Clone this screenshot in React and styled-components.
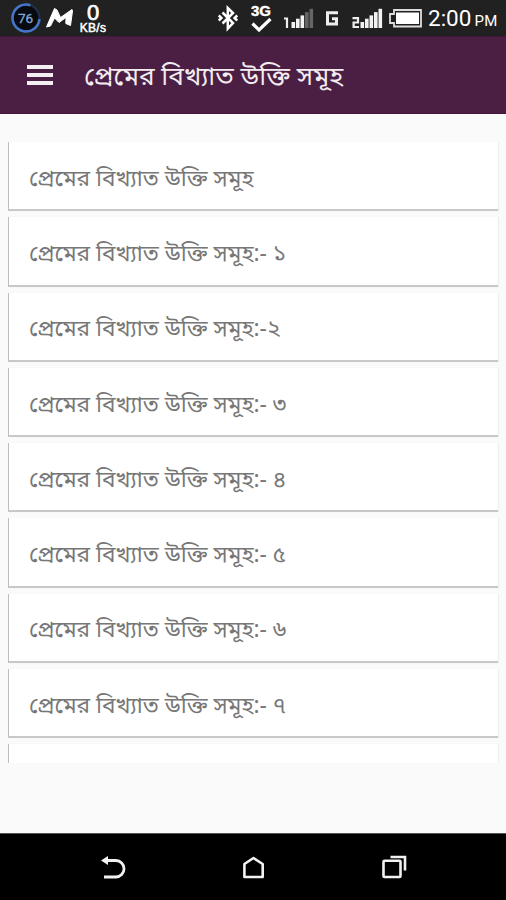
import React from "react";
import styled, { createGlobalStyle } from "styled-components";

const Global = createGlobalStyle`
  * { box-sizing: border-box; }
  body { margin: 0; background: #fafafa; }
`;

const Screen = styled.div`
  width: 506px;
  height: 900px;
  display: flex;
  flex-direction: column;
  overflow: hidden;
  background: #fafafa;
  font-family: "Noto Sans Bengali", "Noto Sans", Roboto, sans-serif;
`;

const StatusBar = styled.div`
  height: 36px;
  flex: none;
  display: flex;
  align-items: flex-start;
  background: #212121;
  color: #fff;
`;

const Slot = styled.div`
  flex: none;
  width: ${(p) => p.$w}px;
  height: 36px;
  margin-left: ${(p) => p.$gap}px;
  svg { display: block; }
`;

const Speed = styled(Slot)`
  display: flex;
  flex-direction: column;
  align-items: center;
  font-family: "Liberation Sans", sans-serif;
  white-space: nowrap;
`;

const SpeedValue = styled.span`
  height: 22px;
  font-size: 22px;
  line-height: 25px;
  -webkit-text-stroke: 0.7px #fff;
`;

const SpeedUnit = styled.span`
  font-size: 12px;
  line-height: 12px;
  -webkit-text-stroke: 0.5px #fff;
  letter-spacing: 0.3px;
`;

const Clock = styled(Slot)`
  display: flex;
  align-items: baseline;
  gap: 3px;
  font: 400 22.5px/37px Roboto, sans-serif;
  white-space: nowrap;
  small { font-size: 15px; letter-spacing: 0.3px; }
`;

const AppBar = styled.header`
  height: 78px;
  flex: none;
  display: flex;
  align-items: center;
  padding-left: 27px;
  background: #4b1f43;
  border-top: 1px solid #421839;
  border-bottom: 1px solid #42123a;
`;

const MenuButton = styled.button`
  width: 26px;
  height: 20px;
  padding: 0;
  border: 0;
  background: none;
  display: flex;
  flex-direction: column;
  justify-content: space-between;
  &::before, &::after, span {
    content: "";
    display: block;
    width: 26px;
    height: 4px;
    background: #f3eef2;
  }
`;

const Title = styled.h1`
  margin: 0 0 0 31px;
  padding-top: 8px;
  font-size: 26.2px;
  font-weight: 400;
  line-height: 40px;
  white-space: nowrap;
  color: #f3ecf1;
`;

const List = styled.main`
  height: 621px;
  flex: none;
  margin-top: 28px;
  padding: 0 8px;
  overflow: hidden;
`;

const Row = styled.div`
  height: 69.3px;
  margin-bottom: 6px;
  padding: 8px 0 0 20px;
  display: flex;
  align-items: center;
  background: #fff;
  border-left: 1px solid #bdbdbd;
  border-bottom: 2px solid #c8c8c8;
  box-shadow: 1px 0 1px #eee;
`;

const RowText = styled.span`
  font-size: 22.7px;
  font-weight: 400;
  line-height: 34px;
  white-space: nowrap;
  color: #777;
`;

const NavBar = styled.nav`
  height: 67px;
  flex: none;
  margin-top: auto;
  padding: 0 99px 0 100px;
  display: flex;
  align-items: center;
  justify-content: space-between;
  background: #000;
  border-top: 1px solid #555;
`;

const Signal = ({ digit, dim = 0 }) => (
  <svg width="32" height="36" viewBox="0 0 32 36">
    <path d={digit} fill="none" stroke="#eee" strokeWidth="2.2" />
    {[0, 1, 2, 3, 4].map((i) => (
      <rect key={i} x={8.5 + i * 4.5} y={22 - i * 3.3} width="3.6" height={6 + i * 3.3} fill={i >= 5 - dim ? "#656565" : "#f2f2f2"} />
    ))}
  </svg>
);

const phrase = "প্রেমের বিখ্যাত উক্তি সমূহ";
const rows = ["", ":- ১", ":-২", ":- ৩", ":- ৪", ":- ৫", ":- ৬", ":- ৭"];

export default function App() {
  return (
    <Screen>
      <Global />
      <StatusBar>
        <Slot $w={31} $gap={10}>
          <svg width="31" height="36" viewBox="0 0 31 36">
            <circle cx="16" cy="18" r="13.5" fill="#080a0f" stroke="#20304d" strokeWidth="2.2" />
            <path d="M16 4.5a13.5 13.5 0 1 1-13.1 10.2" fill="none" stroke="#4476c8" strokeWidth="2.6" transform="rotate(95 16 18)" />
            <text x="15.5" y="23" textAnchor="middle" fontSize="13.5" fontFamily="Roboto" fill="#7fa9d6" stroke="#7fa9d6" strokeWidth=".3">76</text>
          </svg>
        </Slot>
        <Slot $w={28} $gap={5}>
          <svg width="28" height="36" viewBox="0 0 28 36">
            <path d="M.5 27 8.5 8.5 11 10 14.5 17.5 26 9.5 26.5 11 24.5 25.5 19.8 23.5 20 17.5 13 22.5 8.5 18 4.5 26Z" fill="#fff" stroke="#fff" strokeLinejoin="round" />
          </svg>
        </Slot>
        <Speed $w={32} $gap={3}>
          <SpeedValue>0</SpeedValue>
          <SpeedUnit>KB/s</SpeedUnit>
        </Speed>
        <Slot $w={20} $gap={109}>
          <svg width="20" height="36" viewBox="0 0 20 36" fill="none" stroke="#fff" strokeWidth="2.5">
            <path d="M4.5 12.5 15 23 9.8 28.5V8L15 13 4.5 23.5M0.8 15.5 3.4 18 .8 20.5M19.2 15.5 16.6 18l2.6 2.5" />
          </svg>
        </Slot>
        <Slot $w={22} $gap={13}>
          <svg width="22" height="36" viewBox="0 0 22 36">
            <text x="0" y="15.5" fontSize="15" fontWeight="700" fontFamily="Liberation Sans" textLength="20" lengthAdjust="spacingAndGlyphs" fill="#fff" stroke="#fff" strokeWidth=".4">3G</text>
            <path d="M1.5 23.5 8 30 19.5 19" fill="none" stroke="#fff" strokeWidth="3.2" />
          </svg>
        </Slot>
        <Slot $w={32} $gap={10}><Signal digit="M1 18.5H4V28" dim={2} /></Slot>
        <Slot $w={15} $gap={10}>
          <svg width="15" height="36" viewBox="0 0 15 36" fill="none" stroke="#eee" strokeWidth="3">
            <path d="M13 12.8H2.5V24H11.5V18.7H7" />
          </svg>
        </Slot>
        <Slot $w={32} $gap={12}><Signal digit="M.5 18.2H6V22.5H1.6V27H7" /></Slot>
        <Slot $w={36} $gap={4}>
          <svg width="36" height="36" viewBox="0 0 36 36">
            <path d="M6 10H33V26.5H6V23H2V14H6Z" fill="none" stroke="#ddd" strokeWidth="1.8" />
            <rect x="8" y="12.5" width="23" height="11.5" fill="#fff" />
          </svg>
        </Slot>
        <Clock $w={77} $gap={4}>2:00<small>PM</small></Clock>
      </StatusBar>
      <AppBar>
        <MenuButton aria-label="menu"><span /></MenuButton>
        <Title>{phrase}</Title>
      </AppBar>
      <List>
        {rows.map((suffix) => (
          <Row key={suffix}><RowText>{phrase + suffix}</RowText></Row>
        ))}
        <Row />
      </List>
      <NavBar>
        <svg width="26" height="28" viewBox="0 0 26 28" fill="none" stroke="#f2f2f2" strokeWidth="2.8">
          <path d="M6 7.5H16a8 8.2 0 0 1 0 16.5H4" />
          <path d="M1 7.5 8 3V12Z" fill="#f2f2f2" stroke="none" />
        </svg>
        <svg width="26" height="28" viewBox="0 0 26 28" fill="none" stroke="#f2f2f2" strokeWidth="2.6">
          <path d="M3.4 24V11L12.5 5 21.7 11V24Z" strokeLinejoin="round" />
        </svg>
        <svg width="26" height="28" viewBox="0 0 26 28" fill="none" stroke="#f2f2f2" strokeWidth="2.6">
          <rect x="2.5" y="7.8" width="17" height="16.2" rx="1" />
          <path d="M9.5 4H24V17.5" />
        </svg>
      </NavBar>
    </Screen>
  );
}
